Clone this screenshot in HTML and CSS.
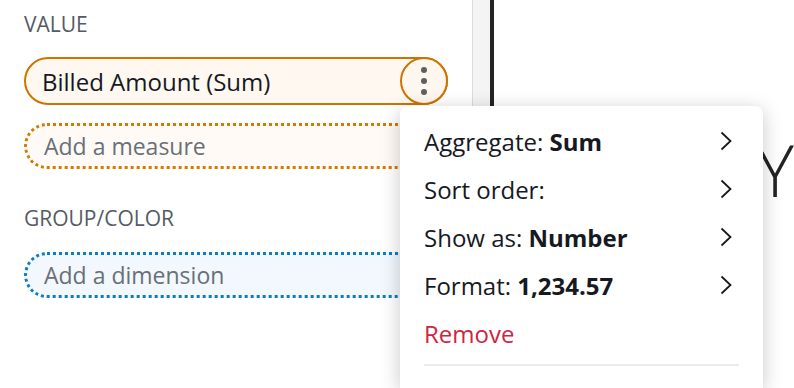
FILE: index.html
```html
<!DOCTYPE html>
<html lang="en">
<head>
    <meta charset="UTF-8">
    <meta name="viewport" content="width=device-width, initial-scale=1.0">
    <title>Field wells</title>
    <link rel="stylesheet" href="styles.css">
</head>
<body>
    <div class="layout">
        <!-- Field wells -->
        <div class="wells">
            <div class="well-label">Value</div>
            <div class="pill field">
                <span class="pill-text">Billed Amount (Sum)</span>
                <button class="kebab" type="button">
                    <span class="dot"></span>
                    <span class="dot"></span>
                    <span class="dot"></span>
                </button>
            </div>
            <div class="pill drop measure">Add a measure</div>

            <div class="well-label group">Group/Color</div>
            <div class="pill drop dimension">Add a dimension</div>
        </div>

        <div class="gutter"></div>
        <div class="splitter"></div>

        <!-- Visual canvas -->
        <div class="canvas">
            <div class="visual-title">Y</div>
        </div>
    </div>

    <!-- Field menu -->
    <div class="menu">
        <div class="menu-item">
            <span>Aggregate: <b>Sum</b></span>
            <svg class="chevron" viewBox="0 0 12 20"><polyline points="1.5,1.5 10.5,10 1.5,18.5"/></svg>
        </div>
        <div class="menu-item">
            <span>Sort order:</span>
            <svg class="chevron" viewBox="0 0 12 20"><polyline points="1.5,1.5 10.5,10 1.5,18.5"/></svg>
        </div>
        <div class="menu-item">
            <span>Show as: <b>Number</b></span>
            <svg class="chevron" viewBox="0 0 12 20"><polyline points="1.5,1.5 10.5,10 1.5,18.5"/></svg>
        </div>
        <div class="menu-item">
            <span>Format: <b>1,234.57</b></span>
            <svg class="chevron" viewBox="0 0 12 20"><polyline points="1.5,1.5 10.5,10 1.5,18.5"/></svg>
        </div>
        <div class="menu-item remove">Remove</div>
        <div class="menu-sep"></div>
    </div>
</body>
</html>
```

FILE: styles.css
```css
body {
    font-family: 'Open Sans', 'Noto Sans', sans-serif;
    background: #fff;
    color: #16191f;
    margin: 0;
    padding: 0;
    width: 794px;
    height: 388px;
    overflow: hidden;
    position: relative;
}

.layout {
    display: flex;
    height: 388px;
}

.wells {
    width: 424px;
    padding: 12px 24px 0 24px;
    flex-shrink: 0;
}

.well-label {
    font-size: 21px;
    line-height: 24px;
    color: #545b64;
    text-transform: uppercase;
    margin-bottom: 21px;
}

.well-label.group {
    margin-top: 37px;
    margin-bottom: 22px;
}

.pill {
    box-sizing: border-box;
    height: 46px;
    border-radius: 24px;
    display: flex;
    align-items: center;
    font-size: 23px;
}

.pill.field {
    height: 48px;
    border: 2px solid #cc7400;
    background: #fff8f0;
    padding-left: 16px;
    justify-content: space-between;
    font-size: 24px;
}

.pill-text {
    color: #16191f;
}

.kebab {
    box-sizing: border-box;
    width: 48px;
    height: 48px;
    margin-right: -2px;
    border: 2px solid #cc7400;
    border-radius: 50%;
    background: #fdf7f0;
    padding: 0;
    display: flex;
    flex-direction: column;
    align-items: center;
    justify-content: center;
    gap: 5px;
}

.dot {
    width: 6px;
    height: 6px;
    border-radius: 50%;
    background: #5f5f5f;
}

.pill.drop {
    border: 3px dotted;
    padding-left: 17px;
    color: #687078;
}

.pill.measure {
    margin-top: 18px;
    border-color: #d17b00;
    background: #fffaf5;
}

.pill.dimension {
    border-color: #0f7cc2;
    background: #f2f8fd;
}

.gutter {
    width: 17px;
    background: #f4f4f4;
    border-left: 1px solid #dcdcdc;
    flex-shrink: 0;
}

.splitter {
    width: 4px;
    background: #232323;
    flex-shrink: 0;
}

.canvas {
    flex: 1;
    overflow: hidden;
    padding: 133px 0 0 262px;
}

.visual-title {
    font-size: 72px;
    line-height: 72px;
    font-weight: 300;
    color: #232323;
    white-space: nowrap;
}

.menu {
    position: absolute;
    left: 400px;
    top: 106px;
    width: 315px;
    height: 271px;
    padding: 11px 24px 0 24px;
    background: #fff;
    border-radius: 8px 8px 0 0;
    box-shadow: 0 4px 20px rgba(0, 0, 0, 0.22);
}

.menu-item {
    height: 48px;
    display: flex;
    align-items: center;
    justify-content: space-between;
    font-size: 24px;
    padding-right: 7px;
}

.menu-item b {
    font-weight: 700;
}

.menu-item.remove {
    color: #d0243f;
}

.chevron {
    width: 12px;
    height: 20px;
    fill: none;
    stroke: #16191f;
    stroke-width: 1.8;
}

.menu-sep {
    height: 2px;
    margin-top: 7px;
    background: #e9ebed;
}
```
